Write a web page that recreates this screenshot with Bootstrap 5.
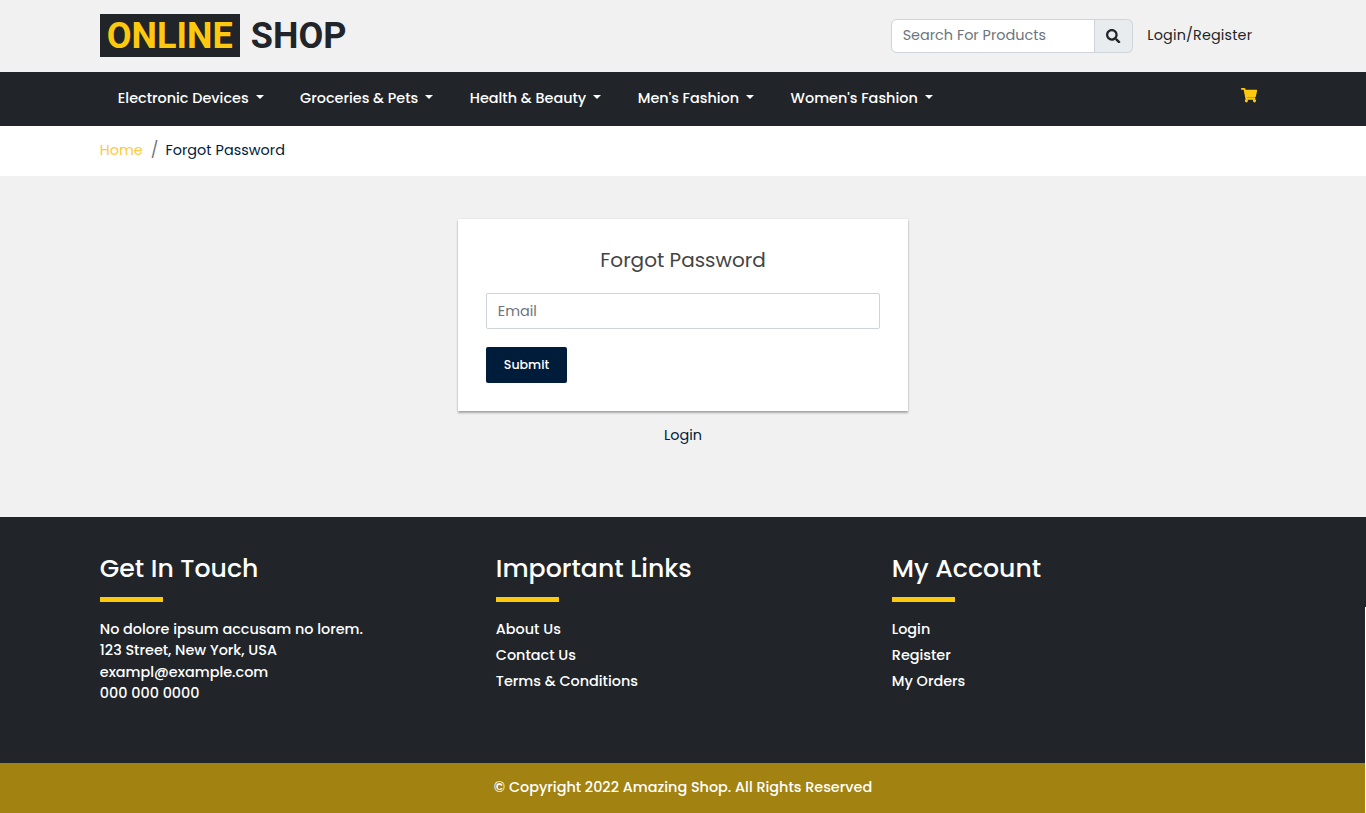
<!DOCTYPE html>
<html lang="en">
<head>
<meta charset="utf-8">
<meta name="viewport" content="width=device-width, initial-scale=1">
<title>Online Shop - Forgot Password</title>
<link href="https://cdn.jsdelivr.net/npm/bootstrap@5.3.0/dist/css/bootstrap.min.css" rel="stylesheet">
<style>
  html { font-size: 14.4px; }
  body { font-family: Poppins, Inter, "Open Sans", sans-serif; font-feature-settings: "cv11"; background: #f1f1f1; color: #212529; overflow: hidden; }
  a { text-decoration: none; color: inherit; }
  .shell { max-width: 1188px; padding: 0 10.8px; }
  .topbar { height: 72px; }
  .brand { font: 700 36px/45px Roboto, sans-serif; height: 43px; margin-top: -2px; }
  .brand-a { background: #212529; color: #fdc90f; padding: 0 7px; width: 140px; height: 43px; }
  .brand-b { margin-left: 11px; }
  .search { width: 242px; height: 34px; }
  .search .form-control { padding: 0 10.3px 1px; border-color: #ced4da; }
  .form-control::placeholder { color: #6c757d; }
  .search .input-group-text { width: 39px; padding: 0 1px 0 0; background: #e9ecef; border-color: #ced4da; justify-content: center; }
  .login-top { margin: 0 14px; letter-spacing: .15px; }
  .mainnav { height: 54px; background: #212529; color: #fff; }
  .mainnav .nav { padding-left: 18px; margin-top: -2px; }
  .mainnav .nav-link { padding: 0; color: #fff; font-weight: 500; line-height: 22px; margin-right: 36.5px; white-space: nowrap; }
  .mainnav .dropdown-toggle::after { margin-left: 7px; vertical-align: 3.6px; border-top-width: 4px; border-left-width: 4px; border-right-width: 4px; }
  .cart { margin: -7px 9px 0 0; }
  .crumbs { height: 50px; background: #fff; color: #001c3b; }
  .crumbs .breadcrumb { line-height: 22px; margin-top: -2px; }
  .crumbs .breadcrumb-item + .breadcrumb-item { padding-left: 8px; letter-spacing: .04px; }
  .crumbs .breadcrumb-item + .breadcrumb-item::before { font-size: 16px; color: #6c757d; padding-right: 7px; }
  .gold { color: #fdc93f; }
  .main-area { height: 341px; padding-top: 43px; }
  .reset-box { width: 450px; height: 192px; background: #fff; padding: 28px; box-shadow: 0 2px 2px rgba(0,0,0,.3), 0 0 2px rgba(0,0,0,.1); }
  .reset-box h1 { font-size: 20px; line-height: 26px; font-weight: 400; color: #444; margin-bottom: 20px; }
  .reset-box .form-control { height: 36px; padding: 0 10.8px; border-radius: 2px; border-color: #ced4da; }
  .submit { background: #001c3b; color: #fff; width: 81px; height: 36px; border-radius: 2px; font-size: 12.6px; font-weight: 500; padding: 0; margin-top: 18px; }
  .submit:hover { background: #003066; color: #fff; }
  .below { color: #001c3b; margin-top: 13px; line-height: 22px; }
  .foot { height: 246px; background: #212529; color: #fff; padding-top: 37px; font-weight: 500; line-height: 21.6px; }
  .foot h2 { font-size: 25.2px; line-height: 30px; font-weight: 500; margin: 0; }
  .rule { width: 63px; height: 5px; background: #fdc90f; margin: 13px 0 16.7px; }
  .foot li { margin-bottom: 4.4px; }
  .copy { height: 50px; background: #a28210; color: #fff; font-weight: 500; }
  .tail { position: relative; }
  .tail::after { content: ""; position: absolute; right: 0; top: 90px; bottom: 0; width: 1px; background: #fff; }
</style>
</head>
<body>
<header>
  <div class="topbar">
    <div class="container shell d-flex align-items-center h-100">
      <a href="#" class="brand d-flex"><span class="brand-a">ONLINE</span><span class="brand-b">SHOP</span></a>
      <div class="input-group search ms-auto">
        <input class="form-control" type="text" placeholder="Search For Products" aria-label="Search">
        <span class="input-group-text"><svg width="14.4" height="14.4" viewBox="0 0 512 512" fill="#212529"><path d="M505 442.7L405.3 343c-4.5-4.5-10.6-7-17-7H372c27.6-35.3 44-79.7 44-128C416 93.1 322.9 0 208 0S0 93.1 0 208s93.1 208 208 208c48.3 0 92.7-16.4 128-44v16.3c0 6.4 2.5 12.5 7 17l99.7 99.7c9.4 9.4 24.6 9.4 33.9 0l28.3-28.3c9.4-9.4 9.4-24.6.1-34zM208 336c-70.7 0-128-57.2-128-128 0-70.7 57.2-128 128-128 70.7 0 128 57.2 128 128 0 70.7-57.2 128-128 128z"/></svg></span>
      </div>
      <a href="#" class="login-top">Login/Register</a>
    </div>
  </div>
  <nav class="mainnav">
    <div class="container shell d-flex align-items-center h-100">
      <div class="nav flex-nowrap">
        <a class="nav-link dropdown-toggle" href="#">Electronic Devices</a>
        <a class="nav-link dropdown-toggle" href="#">Groceries &amp; Pets</a>
        <a class="nav-link dropdown-toggle" href="#">Health &amp; Beauty</a>
        <a class="nav-link dropdown-toggle" href="#">Men's Fashion</a>
        <a class="nav-link dropdown-toggle" href="#">Women's Fashion</a>
      </div>
      <a href="#" class="ms-auto cart d-flex" aria-label="Cart"><svg width="16.2" height="14.4" viewBox="0 0 576 512" fill="#fdc90f"><path opacity=".75" d="M200 310h300v60H212z"/><path d="M528.12 301.319l47.273-208C578.806 78.301 567.391 64 551.99 64H159.208l-9.166-44.81C147.758 8.021 137.93 0 126.529 0H24C10.745 0 0 10.745 0 24v16c0 13.255 10.745 24 24 24h69.883l70.248 343.435C147.325 417.1 136 435.222 136 456c0 30.928 25.072 56 56 56s56-25.072 56-56c0-15.674-6.447-29.835-16.824-40h209.647C430.447 426.165 424 440.326 424 456c0 30.928 25.072 56 56 56s56-25.072 56-56c0-22.172-12.888-41.332-31.579-50.405l5.517-24.276c3.413-15.018-8.002-29.319-23.403-29.319H218.117l-6.545-32h293.145c11.206 0 20.92-7.754 23.403-18.681z"/></svg></a>
    </div>
  </nav>
  <div class="crumbs">
    <div class="container shell d-flex align-items-center h-100">
      <ol class="breadcrumb mb-0">
        <li class="breadcrumb-item"><a href="#" class="gold">Home</a></li>
        <li class="breadcrumb-item">Forgot Password</li>
      </ol>
    </div>
  </div>
</header>
<main class="main-area">
  <form class="reset-box mx-auto">
    <h1 class="text-center">Forgot Password</h1>
    <input class="form-control" type="email" placeholder="Email" aria-label="Email">
    <button type="button" class="btn submit">Submit</button>
  </form>
  <div class="below text-center"><a href="#">Login</a></div>
</main>
<footer class="tail">
  <div class="foot">
    <div class="container shell">
      <div class="row">
        <div class="col-4">
          <h2>Get In Touch</h2>
          <div class="rule"></div>
          <div>No dolore ipsum accusam no lorem.<br>123 Street, New York, USA<br>exampl@example.com<br>000 000 0000</div>
        </div>
        <div class="col-4">
          <h2>Important Links</h2>
          <div class="rule"></div>
          <ul class="list-unstyled mb-0">
            <li><a href="#">About Us</a></li>
            <li><a href="#">Contact Us</a></li>
            <li><a href="#">Terms &amp; Conditions</a></li>
          </ul>
        </div>
        <div class="col-4">
          <h2>My Account</h2>
          <div class="rule"></div>
          <ul class="list-unstyled mb-0">
            <li><a href="#">Login</a></li>
            <li><a href="#">Register</a></li>
            <li><a href="#">My Orders</a></li>
          </ul>
        </div>
      </div>
    </div>
  </div>
  <div class="copy d-flex align-items-center justify-content-center"><span>© Copyright 2022 Amazing Shop. All Rights Reserved</span></div>
</footer>
<script src="https://cdn.jsdelivr.net/npm/bootstrap@5.3.0/dist/js/bootstrap.bundle.min.js"></script>
</body>
</html>
